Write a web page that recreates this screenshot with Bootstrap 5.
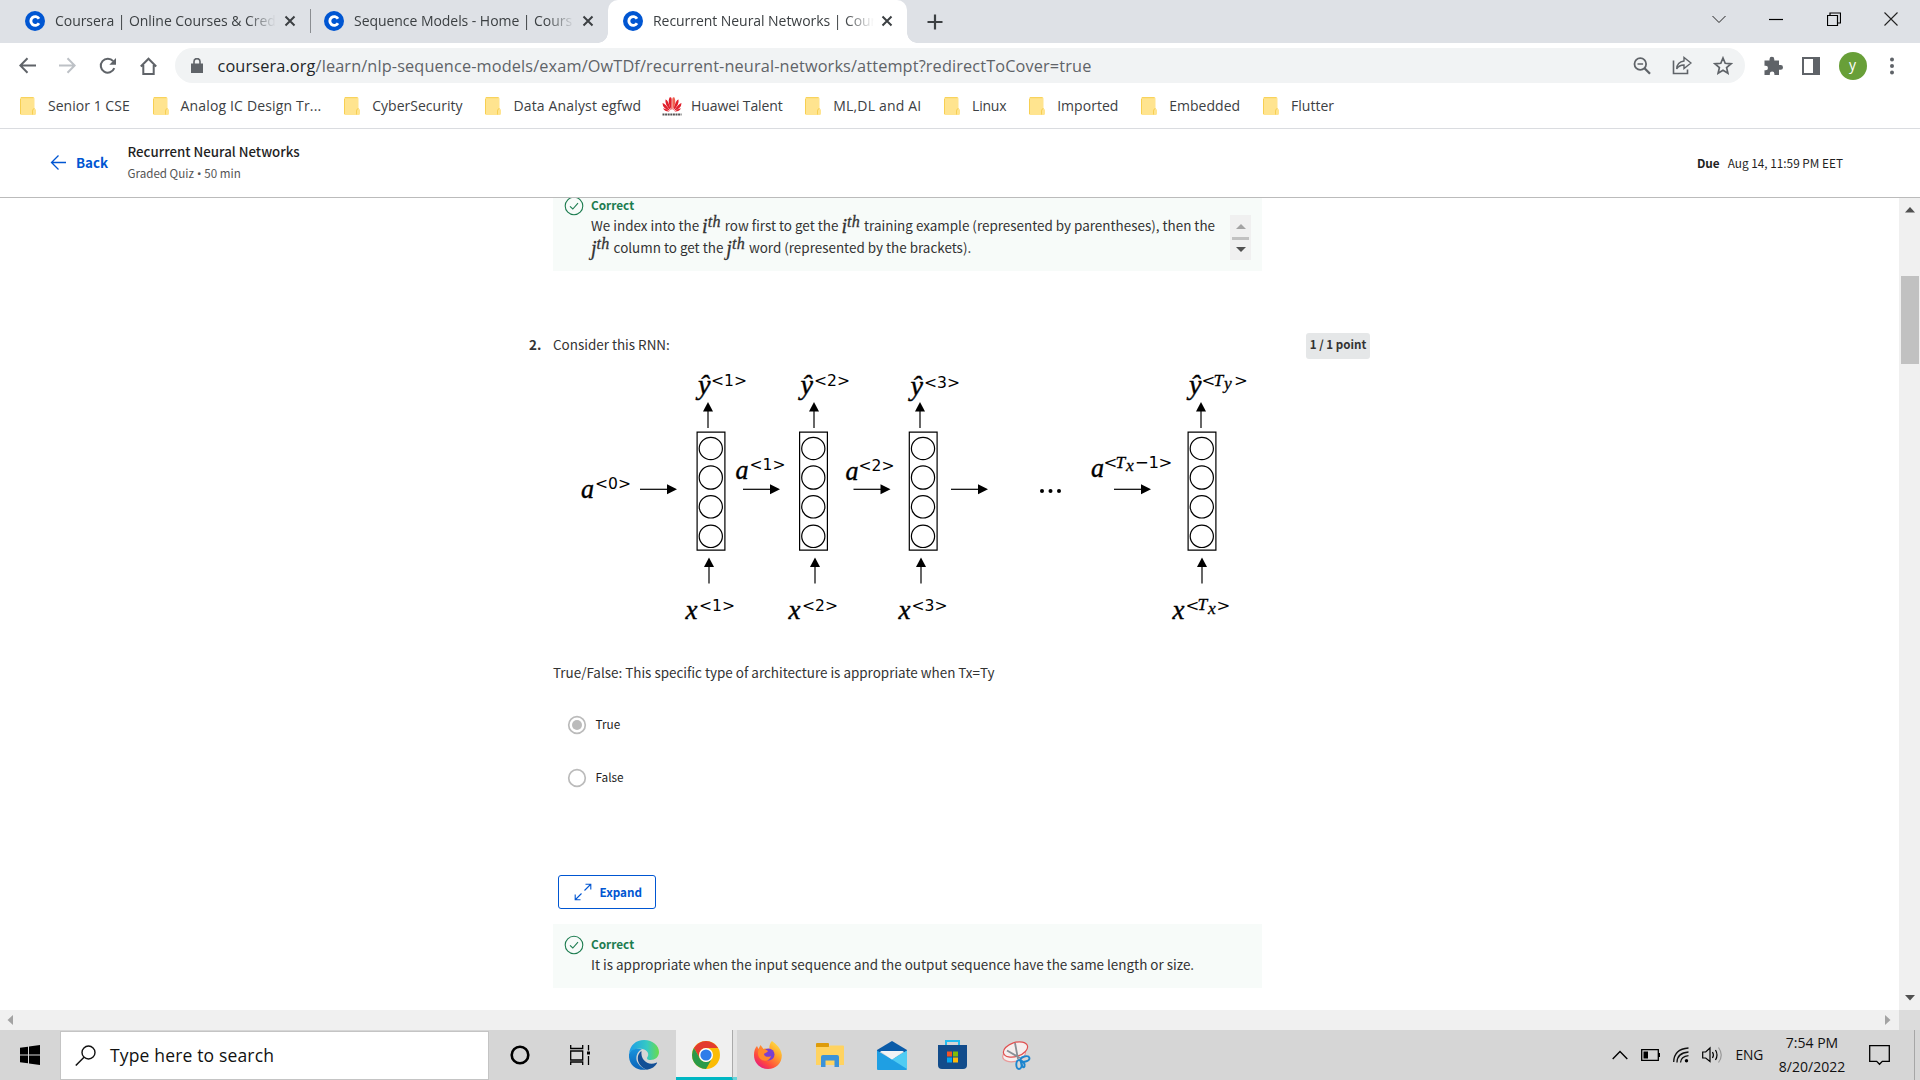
<!DOCTYPE html>
<html lang="en">
<head>
<meta charset="utf-8">
<meta name="viewport" content="width=device-width, initial-scale=1">
<title>Recurrent Neural Networks | Coursera</title>
<link href="https://cdn.jsdelivr.net/npm/bootstrap@5.3.0/dist/css/bootstrap.min.css" rel="stylesheet">
<style>
body{width:1920px;height:1080px;overflow:hidden;background:#fff;color:#1f1f1f;font-family:"Noto Sans CJK SC","Noto Sans",sans-serif}
svg{display:block;flex:none}
.ui{font-family:"Open Sans","Noto Sans",sans-serif;white-space:nowrap}
/* tab strip */
.strip{height:43px;background:#dee1e6;font-size:14px;color:#3c4043}
.ctab{height:43px;line-height:40px;padding-right:14px;padding-bottom:1px}
.ctab-a{width:311px;padding:0 0 1px 25px}
.ctab-b{width:297px;padding-left:13px}
.ctab-c{width:299px;background:#fff;border-radius:10px 10px 0 0;position:relative;padding-left:15px}
.ctab-c:before,.ctab-c:after{content:"";position:absolute;bottom:0;width:10px;height:10px}
.ctab-c:before{left:-10px;background:radial-gradient(circle at 0 0,#dee1e6 9.5px,#fff 10px)}
.ctab-c:after{right:-10px;background:radial-gradient(circle at 100% 0,#dee1e6 9.5px,#fff 10px)}
.ttl{width:221px;margin-left:10px;margin-right:auto;overflow:hidden;letter-spacing:-.05px;-webkit-mask-image:linear-gradient(90deg,#000 192px,transparent 221px);mask-image:linear-gradient(90deg,#000 192px,transparent 221px)}
.vline{width:1px;height:24px;background:#8a8d91;margin-left:14px}
.winbtns{padding-right:22px;gap:43.3px;height:37px}
/* toolbar */
.tools{height:45px;padding:5px 21px 5px 19px}
.navs{width:156px;gap:22.9px}
.omni{width:1570px;height:35px;border-radius:18px;background:#f1f3f4;padding:0 12px 0 16px;font-size:16.3px;letter-spacing:.135px;line-height:36px;color:#5f6368}
.url{margin-left:14.5px}
.omni-acts{gap:21px}
.avatar{width:28px;height:28px;border-radius:50%;background:#689f38;color:#fff;font-size:14px;line-height:26px;text-align:center}
.marks{height:41px;padding:0 0 5px 20px;gap:22.8px;border-bottom:1px solid #dadce0;font-size:14px;color:#3c4043}
.bm{display:flex;align-items:center;gap:12px;letter-spacing:.03px}
.bm:nth-child(2),.bm:nth-child(4),.bm:nth-child(6){letter-spacing:.16px}
.bm:nth-child(5){letter-spacing:-.12px;gap:9px;margin-left:-2px}
.bm:nth-child(7){letter-spacing:-.2px}
/* quiz header */
.qhead{height:69px;border-bottom:1px solid #bbb;padding:0 77px 1px 50px}
.backl{color:#0056d2;font-weight:700;font-size:13.4px;width:77.5px;gap:9px}
.h-t{font-size:13.3px;line-height:20px;font-weight:500;padding-top:1px}
.h-s{font-size:11.6px;line-height:20px;color:#555;padding-top:1px}
.h-s span{font-family:"Noto Sans",sans-serif}
.due{font-size:11.8px}
/* quiz body */
.stage{height:812px}
.quiz{width:841px;margin-left:529px;height:812px;overflow:hidden}
.okbox{width:709px;margin-left:24px;background:#f7fbf9;padding-left:10.5px}
.okbox-1{height:73px}
.okbox-1 .okin{margin-top:-2.5px}
.okbox-2{height:64px;margin-top:15px;padding-top:10.5px}
.okc{margin:1px 0 0 7.5px}
.okt{color:#1d7c50;font-weight:700;font-size:11.8px;line-height:15px;padding-bottom:2.5px}
.txt{font-size:13.45px;line-height:22px;white-space:nowrap;color:#333}
.mth{font:italic 20px/10px "Liberation Serif",serif;-webkit-text-stroke:.3px #333;position:relative;top:1.5px;margin-right:1px}
.mth sup{font-size:16px;top:-.34em;letter-spacing:.3px}
.tiny{width:21px;height:45px;background:#f0f0f0;margin:17px 11px 0 auto;padding:9px 0 8px}
.tiny i{width:17px;height:3px;background:#c1c1c1}
.qrow{margin-top:62px;height:26px}
.qlab{padding-bottom:5px}
.num{width:24px;font-weight:700}
.pts{width:64px;height:26px;line-height:23px;background:#e5e7e8;border-radius:3px;font-size:11.6px;font-weight:700;text-align:center}
.qtext{margin-left:24px}
.qlast{position:relative;top:-1px}
.opt{font-size:11.8px;gap:8.5px;height:20px;margin:31px 0 0 38px;line-height:18px}
.opt span{padding-bottom:2px}
.opt+.opt{margin-top:33px}
.expbtn{width:98px;height:34px;border:1.3px solid #0056d2;border-radius:3px;color:#0056d2;font-size:11.7px;font-weight:700;padding:0 0 1px 15px;gap:7.5px;margin:87px 0 0 29px;background:#fff}
.sbar{width:21px;background:#f0f0f0;padding:9px 0}
.thumb{width:18px;height:88px;background:#c1c1c1;margin-top:63px}
.hbar{height:20px;background:#f0f0f0;padding-left:7px}
.corner{width:21px;height:20px;background:#dcdcdc;margin-left:8px}
/* taskbar */
.task{height:50px;background:#d6d6d6;color:#111}
.start{width:60px;padding-left:20px}
.find{width:429px;height:49px;background:#fff;border:1px solid #c4c4c4;padding-left:14px;gap:14px;font-size:17.5px;letter-spacing:.16px}
.cell{width:62px;height:50px;display:flex;align-items:center;justify-content:center}
.live{width:57px;background:#f0f0f0;border-bottom:3px solid #00b7c3;border-right:1px solid #aaa;margin-left:1px;padding:3px 0 0 3px}
.stack{width:4px;height:50px;background:#e4e4e4;border-bottom:3px solid #67d4da}
.tray{gap:13px}
.lang{font-size:13.8px;letter-spacing:-.2px}
.clock{font-size:14px;line-height:24px;width:72px;text-align:center}
.desk{width:6px;height:50px;border-left:1px solid #a6a6a6;margin-left:11px}
</style>
<script src="https://cdn.jsdelivr.net/npm/bootstrap@5.3.0/dist/js/bootstrap.bundle.min.js"></script>
</head>
<body>
<svg width="0" height="0" class="position-absolute">
 <defs>
  <symbol id="cr" viewBox="0 0 20 20"><circle cx="10" cy="10" r="10" fill="#0056d2"/><path d="M14 7.7A4.4 4.4 0 1 0 14 12.3" fill="none" stroke="#fff" stroke-width="2.9"/></symbol>
  <symbol id="cl" viewBox="0 0 12 12"><path d="M1.5 1.5l9 9M10.5 1.5l-9 9" stroke="#3c4043" stroke-width="2" fill="none"/></symbol>
  <symbol id="fo" viewBox="0 0 16 18"><path d="M1.5 0H13q1.500 0 1.500 1.500V11.500q1.500.3 1.500 2V16.500q0 1.500-1.500 1.500h-13Q0 18 0 16.500v-15Q0 0 1.500 0z" fill="#ffe48f"/><path d="M14.500 11.500q-2 .2-2 2.500v3.500M.5 2v15M1 .7h12.500" stroke="#f7cf52" fill="none"/></symbol>
  <symbol id="ok" viewBox="0 0 20 20"><circle cx="10" cy="10" r="8.8" fill="none" stroke="#1d7c50" stroke-width="1.1"/><path d="M6 10.3l2.800 2.700L14 7.200" fill="none" stroke="#1d7c50" stroke-width="1.1"/></symbol>
  <g id="cellbox" fill="none" stroke="#000" stroke-width="1.2"><path d="M.6.6h27.800v118H.6z"/><ellipse cx="14.300" cy="17" rx="11.600" ry="11.200"/><ellipse cx="14.300" cy="46" rx="11.600" ry="11.700"/><ellipse cx="14.300" cy="75.300" rx="11.600" ry="11.200"/><ellipse cx="14.300" cy="104.800" rx="11.600" ry="11.200"/></g>
  <g id="up"><path d="M0 8v18" stroke="#000" stroke-width="1.200"/><path d="M-5 9.500L0 0l5 9.500z"/></g>
  <g id="rt"><path d="M0 0h28" stroke="#000" stroke-width="1.200"/><path d="M27 -5l10 5-10 5z"/></g>
 </defs>
</svg>

<div class="strip ui d-flex">
 <div class="ctab ctab-a d-flex align-items-center"><svg width="20" height="20"><use href="#cr"/></svg><div class="ttl">Coursera | Online Courses &amp; Cred</div><svg width="12" height="12"><use href="#cl"/></svg><div class="vline"></div></div>
 <div class="ctab ctab-b d-flex align-items-center"><svg width="20" height="20"><use href="#cr"/></svg><div class="ttl">Sequence Models - Home | Cours</div><svg width="12" height="12"><use href="#cl"/></svg></div>
 <div class="ctab ctab-c d-flex align-items-center"><svg width="20" height="20"><use href="#cr"/></svg><div class="ttl">Recurrent Neural Networks | Cour</div><svg width="12" height="12"><use href="#cl"/></svg></div>
 <svg class="align-self-center ms-3" width="24" height="16" viewBox="0 0 24 16"><path d="M12 .5v15M4.500 8h15" stroke="#3c4043" stroke-width="2.200"/></svg>
 <div class="winbtns d-flex align-items-center ms-auto">
  <svg width="14" height="14" viewBox="0 0 14 14"><path d="M.5 4L7 10.500 13.500 4" fill="none" stroke="#222"/></svg>
  <svg width="14" height="14" viewBox="0 0 14 14"><path d="M0 7.500h14" stroke="#000" stroke-width="1.200"/></svg>
  <svg width="14" height="14" viewBox="0 0 14 14"><path d="M.5 3.500h10v10h-10zM3 3V1h10.500v10H11" fill="none" stroke="#000" stroke-width="1.200"/></svg>
  <svg width="14" height="14" viewBox="0 0 14 14"><path d="M.5.5l13 13M13.500.5l-13 13" stroke="#222" stroke-width="1.100"/></svg>
 </div>
</div>

<div class="tools ui d-flex align-items-center">
 <div class="navs d-flex align-items-center">
  <svg width="17" height="17" viewBox="0 0 17 17"><path d="M17 8.500H1.500M8.500 1.200L1.300 8.500l7.200 7.300" fill="none" stroke="#5f6368" stroke-width="2"/></svg>
  <svg width="17" height="17" viewBox="0 0 17 17"><path d="M0 8.500h15.500M8.500 1.200l7.200 7.300-7.200 7.300" fill="none" stroke="#bdc1c6" stroke-width="2"/></svg>
  <svg width="18" height="18" viewBox="0 0 18 18"><path d="M15.300 11.200A7 7 0 1 1 14.200 4.200" fill="none" stroke="#5f6368" stroke-width="2"/><path d="M17 1v6.700h-6.700z" fill="#5f6368"/></svg>
  <svg width="17" height="18" viewBox="0 0 17 18"><path d="M3.300 8v9h10.400V8M.8 9.500L8.500 1.700l7.700 7.800" fill="none" stroke="#5f6368" stroke-width="2"/></svg>
 </div>
 <div class="omni d-flex align-items-center">
  <svg width="12" height="15" viewBox="0 0 12 15"><path d="M0 5.500h12V15H0z" fill="#5f6368"/><path d="M3 6V3.600a3 3 0 0 1 6 0V6" fill="none" stroke="#5f6368" stroke-width="1.600"/></svg>
  <div class="url"><span class="text-dark">coursera.org</span>/learn/nlp-sequence-models/exam/OwTDf/recurrent-neural-networks/attempt?redirectToCover=true</div>
  <div class="omni-acts d-flex ms-auto align-items-center">
  <svg width="18" height="18" viewBox="0 0 18 18"><circle cx="7.300" cy="7" r="5.800" fill="none" stroke="#5f6368" stroke-width="1.800"/><path d="M11.500 11.300l5.500 5.500" stroke="#5f6368" stroke-width="2.300"/><path d="M4.500 7h5.600" stroke="#5f6368" stroke-width="1.500"/></svg>
  <svg width="20" height="19" viewBox="0 0 20 19"><path d="M1.500 4.500v13h14v-4" fill="none" stroke="#5f6368" stroke-width="1.600"/><path d="M12 5V1.500L19 7l-7 5.500V9Q7 9 4.700 13 5 6 12 5z" fill="none" stroke="#5f6368" stroke-width="1.400"/></svg>
  <svg width="20" height="19" viewBox="0 0 20 19"><path d="M10 2l2.200 5.300 5.800.5-4.400 3.800 1.300 5.600-4.900-3-4.900 3 1.300-5.600L2 7.800l5.800-.5z" fill="none" stroke="#5f6368" stroke-width="1.700"/></svg>
  </div>
 </div>
 <svg class="ms-auto" width="20" height="20" viewBox="0 0 20 20"><path d="M1 4.500h4.500V3.200a2.400 2.400 0 0 1 4.800 0v1.300H15v4.600h1.700a2.300 2.300 0 0 1 0 4.600H15V19h-4.600v-1.200a2.300 2.300 0 0 0-4.600 0V19H.5v-4.800h1.200a2.200 2.200 0 0 0 0-4.500H.5V4.500z" fill="#5f6368"/></svg>
 <svg class="ms-auto" width="18" height="18" viewBox="0 0 18 18"><path d="M1 1h16v16H1z" fill="#fff" stroke="#5f6368" stroke-width="2"/><path d="M11 0h7v18h-7z" fill="#5f6368"/></svg>
 <div class="avatar ms-auto">y</div>
 <svg class="ms-auto" width="14" height="18" viewBox="0 0 14 18"><g fill="#5f6368"><circle cx="7" cy="2.500" r="2"/><circle cx="7" cy="9" r="2"/><circle cx="7" cy="15.500" r="2"/></g></svg>
</div>

<div class="marks ui d-flex align-items-center">
 <div class="bm"><svg width="16" height="18"><use href="#fo"/></svg>Senior 1 CSE</div>
 <div class="bm"><svg width="16" height="18"><use href="#fo"/></svg>Analog IC Design Tr...</div>
 <div class="bm"><svg width="16" height="18"><use href="#fo"/></svg>CyberSecurity</div>
 <div class="bm"><svg width="16" height="18"><use href="#fo"/></svg>Data Analyst egfwd</div>
 <div class="bm"><svg width="20" height="20" viewBox="0 0 20 20"><g fill="#e0202c"><path d="M9.600 14Q5 7 7.500 1.500 10 0 9.700 5z"/><path d="M10.400 14Q15 7 12.500 1.500 10 0 10.300 5z" fill="#f0604f"/><path d="M8.800 14.300Q2.500 9 3.500 3.500 6 3 8.800 14.300zM11.200 14.300Q17.500 9 16.500 3.500 14 3 11.200 14.300z"/><path d="M8 14.800Q.5 12.500.5 7 3.500 7.500 8 14.800zM12 14.800Q19.500 12.500 19.500 7 16.500 7.500 12 14.800zM7.500 15.500Q3 16 1 12.300 4 12.500 7.500 15.500zM12.500 15.500Q17 16 19 12.300 16 12.500 12.500 15.500z"/></g><path d="M.5 18.500h19" stroke="#555" stroke-width="2" stroke-dasharray="2 .6"/></svg>Huawei Talent</div>
 <div class="bm"><svg width="16" height="18"><use href="#fo"/></svg>ML,DL and AI</div>
 <div class="bm"><svg width="16" height="18"><use href="#fo"/></svg>Linux</div>
 <div class="bm"><svg width="16" height="18"><use href="#fo"/></svg>Imported</div>
 <div class="bm"><svg width="16" height="18"><use href="#fo"/></svg>Embedded</div>
 <div class="bm"><svg width="16" height="18"><use href="#fo"/></svg>Flutter</div>
</div>

<div class="qhead d-flex align-items-center">
 <div class="backl d-flex align-items-center">
  <svg width="17" height="17" viewBox="0 0 17 17"><path d="M16 8.500H1.500M8.500 1.500l-7 7 7 7" fill="none" stroke="#0056d2" stroke-width="1.300"/></svg>Back</div>
 <div><div class="h-t">Recurrent Neural Networks</div><div class="h-s">Graded Quiz<span> • </span>50 min</div></div>
 <div class="due ms-auto"><b class="me-2">Due</b>Aug 14, 11:59 PM EET</div>
</div>

<div class="stage d-flex">
 <div class="quiz">
  <div class="okbox okbox-1 d-flex">
   <div class="okin d-flex">
    <svg width="20" height="20"><use href="#ok"/></svg>
    <div class="okc"><div class="okt">Correct</div>
    <div class="txt">We index into the <span class="mth">i<sup>th</sup></span> row first to get the <span class="mth">i<sup>th</sup></span> training example (represented by parentheses), then the<br><span class="mth">j<sup>th</sup></span> column to get the <span class="mth">j<sup>th</sup></span> word (represented by the brackets).</div></div>
   </div>
   <div class="tiny d-flex flex-column align-items-center justify-content-between"><svg width="10" height="5"><path d="M0 5l5-5 5 5z" fill="#a3a3a3"/></svg><i></i><svg width="10" height="5"><path d="M0 0l5 5 5-5z" fill="#505050"/></svg></div>
  </div>
  <div class="qrow d-flex align-items-center txt"><span class="num qlab">2.</span><span class="qlab">Consider this RNN:</span><span class="pts ms-auto">1 / 1 point</span></div>
  <svg class="qtext" width="709" height="303" viewBox="553 359 709 303">
   <use href="#cellbox" x="696.500" y="431.500"/><use href="#cellbox" x="799" y="431.500"/><use href="#cellbox" x="908.700" y="431.500"/><use href="#cellbox" x="1187.500" y="431.500"/>
   <use href="#up" x="708" y="402"/><use href="#up" x="814" y="402"/><use href="#up" x="920" y="402"/><use href="#up" x="1201" y="402"/>
   <use href="#up" x="709" y="557.500"/><use href="#up" x="815" y="557.500"/><use href="#up" x="921" y="557.500"/><use href="#up" x="1202" y="557.500"/>
   <use href="#rt" x="640" y="489.300"/><use href="#rt" x="743" y="489.300"/><use href="#rt" x="853.500" y="489.300"/><use href="#rt" x="951" y="489.300"/><use href="#rt" x="1114" y="489.300"/>
   <circle cx="1042" cy="491" r="2"/><circle cx="1050.500" cy="491" r="2"/><circle cx="1059" cy="491" r="2"/>
   <g font-family="Liberation Serif, serif" font-style="italic" font-size="27" stroke="#000" stroke-width=".4">
    <text x="698" y="393.500" textLength="12.500" lengthAdjust="spacingAndGlyphs">ŷ</text><text x="800.500" y="393.500" textLength="12.500" lengthAdjust="spacingAndGlyphs">ŷ</text><text x="910.500" y="395" textLength="12.500" lengthAdjust="spacingAndGlyphs">ŷ</text><text x="1189" y="393.500" textLength="12.500" lengthAdjust="spacingAndGlyphs">ŷ</text>
    <text x="581" y="497.500" textLength="13" lengthAdjust="spacingAndGlyphs">a</text><text x="735.500" y="478.500" textLength="13" lengthAdjust="spacingAndGlyphs">a</text><text x="845.500" y="480" textLength="13" lengthAdjust="spacingAndGlyphs">a</text><text x="1091" y="476.500" textLength="13" lengthAdjust="spacingAndGlyphs">a</text>
    <text x="685.500" y="619" textLength="12" lengthAdjust="spacingAndGlyphs">x</text><text x="788.500" y="619" textLength="12" lengthAdjust="spacingAndGlyphs">x</text><text x="898.500" y="619" textLength="12" lengthAdjust="spacingAndGlyphs">x</text><text x="1172.500" y="619" textLength="12" lengthAdjust="spacingAndGlyphs">x</text>
   </g>
   <g font-family="DejaVu Sans, sans-serif" font-size="16.500">
    <text x="711" y="386" textLength="36" lengthAdjust="spacingAndGlyphs">&lt;1&gt;</text><text x="814" y="386" textLength="36" lengthAdjust="spacingAndGlyphs">&lt;2&gt;</text><text x="924" y="387.500" textLength="36" lengthAdjust="spacingAndGlyphs">&lt;3&gt;</text>
    <text x="595" y="488.500" textLength="36" lengthAdjust="spacingAndGlyphs">&lt;0&gt;</text><text x="749.500" y="469.500" textLength="36" lengthAdjust="spacingAndGlyphs">&lt;1&gt;</text><text x="858.500" y="471" textLength="36" lengthAdjust="spacingAndGlyphs">&lt;2&gt;</text>
    <text x="699" y="610.500" textLength="36" lengthAdjust="spacingAndGlyphs">&lt;1&gt;</text><text x="802" y="610.500" textLength="36" lengthAdjust="spacingAndGlyphs">&lt;2&gt;</text><text x="911.500" y="610.500" textLength="36" lengthAdjust="spacingAndGlyphs">&lt;3&gt;</text>
    <text x="1201.500" y="386">&lt;</text><text x="1234" y="386">&gt;</text>
    <text x="1103.500" y="468">&lt;</text><text x="1135" y="468">−</text><text x="1148.500" y="468">1</text><text x="1158.500" y="468">&gt;</text>
    <text x="1185.500" y="610.500">&lt;</text><text x="1216.500" y="610.500">&gt;</text>
   </g>
   <g font-family="Liberation Serif, serif" font-style="italic" font-size="17.500" stroke="#000" stroke-width=".3">
    <text x="1213.500" y="385.500">T</text><text x="1224" y="389">y</text><text x="1115.500" y="467.500">T</text><text x="1126" y="470.500">x</text><text x="1197.500" y="610">T</text><text x="1208" y="613.500">x</text>
   </g>
  </svg>
  <div class="txt qtext qlast">True/False: This specific type of architecture is appropriate when Tx=Ty</div>
  <div class="opt d-flex align-items-center"><svg width="20" height="20"><circle cx="10" cy="10" r="8.300" fill="none" stroke="#bbb" stroke-width="1.700"/><circle cx="10" cy="10" r="5" fill="#bbb"/></svg><span>True</span></div>
  <div class="opt d-flex align-items-center"><svg width="20" height="20"><circle cx="10" cy="10" r="8.300" fill="none" stroke="#bbb" stroke-width="1.700"/></svg><span>False</span></div>
  <button class="expbtn d-flex align-items-center"><svg width="18" height="18" viewBox="0 0 18 18"><path d="M10.500 7.500L16.500 1.500M11.500 1.200h5.300V6.500M7.500 10.500L1.500 16.500M1.200 11.500v5.300H6.500" fill="none" stroke="#0056d2" stroke-width="1.100"/></svg>Expand</button>
  <div class="okbox okbox-2"><div class="okin d-flex"><svg width="20" height="20"><use href="#ok"/></svg><div class="okc"><div class="okt">Correct</div><div class="txt">It is appropriate when the input sequence and the output sequence have the same length or size.</div></div></div></div>
 </div>
 <div class="sbar d-flex flex-column align-items-center ms-auto"><svg width="10" height="6"><path d="M0 5.500L5 0l5 5.500z" fill="#505050"/></svg><div class="thumb"></div><svg class="mt-auto" width="10" height="6"><path d="M0 0l5 5.500L10 0z" fill="#505050"/></svg></div>
</div>
<div class="hbar d-flex align-items-center"><svg width="6" height="10"><path d="M6 0L.5 5 6 10z" fill="#a3a3a3"/></svg><svg class="ms-auto" width="6" height="10"><path d="M0 0l5.500 5L0 10z" fill="#a3a3a3"/></svg><div class="corner"></div></div>

<div class="task ui d-flex align-items-center">
 <div class="start"><svg width="20" height="20" viewBox="0 0 20 20"><path d="M0 2.800l8-1.100v7.800H0zM9 1.500L20 0v9.500H9zM0 10.500h8v7.800l-8-1.100zM9 10.500h11V20L9 18.500z"/></svg></div>
 <div class="find d-flex align-items-center"><svg width="21" height="21" viewBox="0 0 21 21"><circle cx="13.500" cy="7.500" r="6.500" fill="none" stroke="#111" stroke-width="1.400"/><path d="M9 12.300L.8 20.500" stroke="#111" stroke-width="1.500"/></svg>Type here to search</div>
 <div class="cell"><svg width="20" height="20"><circle cx="10" cy="10" r="8.300" fill="none" stroke="#000" stroke-width="2.600"/></svg></div>
 <div class="cell pe-1"><svg width="20" height="20" viewBox="0 0 20 20"><path d="M.7 0v3.500h12V0M.7 6h12v9H.7zM.7 20v-3h12v3M18.500 0v5.500M18.500 11v9" fill="none" stroke="#000" stroke-width="1.300"/><path d="M17 6.500h3v3h-3z"/></svg></div>
 <div class="cell"><svg width="30" height="30" viewBox="0 0 30 30"><defs><linearGradient id="eg" x1="0" x2="1"><stop offset="0" stop-color="#1e9de8"/><stop offset=".6" stop-color="#35c9c4"/><stop offset="1" stop-color="#6bdc4a"/></linearGradient><linearGradient id="eb" y1="0" y2="1" x1="0" x2="0"><stop offset="0" stop-color="#1993dc"/><stop offset="1" stop-color="#0b62b8"/></linearGradient></defs>
  <path d="M0 14C1 5 7 0 15 0c9 0 15 6 15 12 0 5-4 8-8.500 8-3.500 0-4-1.500-3-3 2-3 0-7-5-8C8 8 2 10 0 14z" fill="url(#eg)"/><path d="M0 14C2 9 8 7.500 13 9.500c-4 1-7 7-5 12 2 4 6 7.500 10 8C8 31.500-1 25 0 14z" fill="url(#eb)"/><path d="M12.500 11c-6 4-5 15 5.500 18.700 5-.7 8-3.200 10-6.400.4-.8-.2-1-.8-.6-8 3.600-16-2.700-14.700-11.700z" fill="#134f96"/></svg></div>
 <div class="cell live"><svg width="28" height="28" viewBox="0 0 28 28"><circle cx="14" cy="14" r="14" fill="#fbbc05"/><path d="M1.900 7A14 14 0 0 1 26.100 7H14a7 7 0 0 0-6 10.500z" fill="#e33b2e"/><path d="M1.900 7A14 14 0 0 0 14 28l6-10.500a7 7 0 0 1-12 0z" fill="#2a9a48"/><circle cx="14" cy="14" r="7" fill="#fff"/><circle cx="14" cy="14" r="5.600" fill="#2f7de9"/></svg></div><div class="stack"></div>
 <div class="cell"><svg width="28" height="30" viewBox="0 0 28 30"><defs><linearGradient id="ff" x1="1" y1="0" x2=".2" y2="1"><stop offset="0" stop-color="#fff44f"/><stop offset=".4" stop-color="#ffa32b"/><stop offset=".75" stop-color="#ff4a3d"/><stop offset="1" stop-color="#e31587"/></linearGradient></defs><path d="M18 1c4 3 9 7 9.800 14C28 23 22 29 14 29S0 23 0 15c0-4 1-7 3-9l1.500 3L6.500 5l3 4c2-.8 4-.6 6 .2C15 6 16 3 18 1z" fill="url(#ff)"/><circle cx="14.500" cy="14.500" r="6" fill="#7a3fd0"/><path d="M5 9c3-.5 6 0 9 2-1 2-4 2-4 3.500 1 2.500 4 3 7 1.500-1 4-5 6-9 4-4-2-5-7-3-11z" fill="#ff8a2a"/></svg></div>
 <div class="cell"><svg width="28" height="24" viewBox="0 0 28 24"><path d="M0 1q0-1 1-1h11q1 0 1 1v4H0z" fill="#dd9b0b"/><path d="M0 4h12.500L14 2.500h13q1 0 1 1V22H0z" fill="#ffd361"/><path d="M5 24V14q0-2 2-2h14q2 0 2 2v10h-4.500v-6.500h-9V24z" fill="#3b92d9"/></svg></div>
 <div class="cell"><svg width="30" height="29" viewBox="0 0 30 29"><path d="M0 9L15 0l15 9v2H0z" fill="#0a5ba8"/><path d="M0 9.500l15 9 15-9V28q0 1-1 1H1q-1 0-1-1z" fill="#1f9fe3"/><path d="M15 18.500l15-9V28z" fill="#50ccf3"/><path d="M3 10h24L15 18.500z" fill="#f2f4f6"/></svg></div>
 <div class="cell pe-1"><svg width="29" height="30" viewBox="0 0 29 30"><path d="M8 5V1h13v4" fill="none" stroke="#26bdf0" stroke-width="2"/><path d="M0 5h29v20q0 4-4 4H4q-4 0-4-4z" fill="#124c8b"/><path d="M9 11.500h5v5H9z" fill="#f35325"/><path d="M15 11.500h5v5h-5z" fill="#81bc06"/><path d="M9 17.500h5v5H9z" fill="#05a6f0"/><path d="M15 17.500h5v5h-5z" fill="#ffba08"/></svg></div>
 <div class="cell"><svg width="29" height="29" viewBox="0 0 29 29"><g fill="#f6eeee" stroke="#e05050" stroke-width="1.200"><ellipse cx="12" cy="14" rx="11.500" ry="6.500" transform="rotate(-12 12 14)" stroke="#e89a9a"/><ellipse cx="13.500" cy="8.500" rx="12.500" ry="7" transform="rotate(-18 13.500 8.500)"/></g><path d="M13 2l3 16M5 9.500L18 17" stroke="#8a8f96" stroke-width="1.800"/><g fill="none" stroke="#1d86cf" stroke-width="1.900"><ellipse cx="23" cy="18" rx="4.500" ry="2.600" transform="rotate(-15 23 18)"/><ellipse cx="17" cy="23.500" rx="2.700" ry="4.500"/><path d="M18.500 19.500q5 2 4 6-2 3-4-6"/></g></svg></div>
 <div class="tray d-flex align-items-center ms-auto">
  <svg width="16" height="10" viewBox="0 0 16 10"><path d="M.7 9L8 1.500 15.300 9" fill="none" stroke="#000" stroke-width="1.400"/></svg>
  <svg width="19" height="12" viewBox="0 0 19 12"><path d="M.7.7h16.600v10.600H.7zM18.400 4v4" fill="none" stroke="#000" stroke-width="1.300"/><path d="M2.500 2.500h4.500v7H2.500z"/></svg>
  <svg width="16" height="16" viewBox="0 0 16 16"><g fill="none" stroke="#111" stroke-width="1.300"><path d="M.7 15Q1 2 15.500 1M4 15.500Q4 6 15.500 5M7.500 15.500Q8 9.500 15.500 8.700"/></g><circle cx="13.500" cy="13.800" r="1.700"/></svg>
  <svg width="21" height="18" viewBox="0 0 21 18"><path d="M.7 6h3L8 2v13.500L3.700 12h-3z" fill="none" stroke="#000" stroke-width="1.200"/><path d="M10.500 6q1.800 3 0 6M13.500 4q3 5 0 10" fill="none" stroke="#000" stroke-width="1.200"/><path d="M16.500 1.500q5.500 7.500 0 15" fill="none" stroke="#999" stroke-width="1.200"/></svg>
  <span class="lang">ENG</span>
  <div class="clock">7:54 PM<br>8/20/2022</div>
  <svg class="ms-2" width="21" height="21" viewBox="0 0 21 21"><path d="M.7.7h19.600v15.600h-7l-2.800 3-2.800-3h-7z" fill="none" stroke="#000" stroke-width="1.300"/></svg>
  <div class="desk"></div>
 </div>
</div>
</body>
</html>
